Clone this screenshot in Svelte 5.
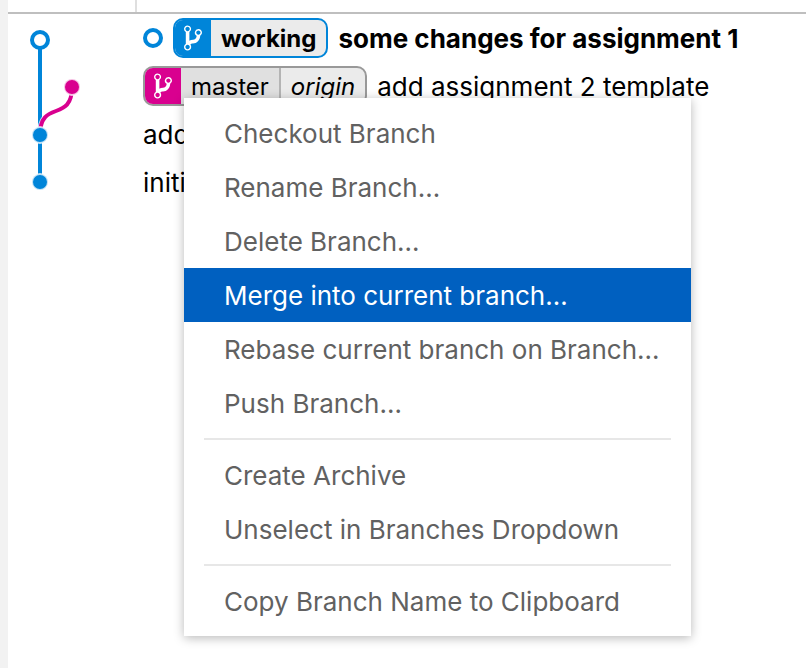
<script>
  const commits = [
    {
      message: 'some changes for assignment 1',
      head: true,
      branch: { name: 'working', color: '#0085d9' }
    },
    {
      message: 'add assignment 2 template',
      branch: { name: 'master', remote: 'origin', color: '#d9008f' }
    },
    { message: 'add' },
    { message: 'initial' }
  ];

  const groups = [
    [
      'Checkout Branch',
      'Rename Branch…',
      'Delete Branch…',
      'Merge into current branch…',
      'Rebase current branch on Branch…',
      'Push Branch…'
    ],
    ['Create Archive', 'Unselect in Branches Dropdown'],
    ['Copy Branch Name to Clipboard']
  ];

  let active = $state('Merge into current branch…');
</script>

<main>
  <header><span></span></header>
  <div class="body">
    <svg class="graph" width="128" height="192" viewBox="0 0 128 192" aria-hidden="true">
      <path d="M32 26V168" fill="none" stroke="#0085d9" stroke-width="4" />
      <path d="M64 73C64 109 32 85 32 121" fill="none" stroke="#fff" stroke-opacity=".75" stroke-width="6" />
      <path d="M64 73C64 109 32 85 32 121" fill="none" stroke="#d9008f" stroke-width="4" />
      <circle cx="32" cy="26" r="8" fill="#fff" stroke="#0085d9" stroke-width="4" />
      <g stroke="#fff" stroke-opacity=".75" stroke-width="2">
        <circle cx="64" cy="73" r="8" fill="#d9008f" />
        <circle cx="32" cy="121" r="8" fill="#0085d9" />
        <circle cx="32" cy="168" r="8" fill="#0085d9" />
      </g>
    </svg>
    <ol>
      {#each commits as commit}
        <li class:head={commit.head}>
          {#if commit.head}<i class="dot"></i>{/if}
          {#if commit.branch}
            <span class="ref">
              <svg style:background={commit.branch.color} width="36" height="36" viewBox="-5 -2 20 20" aria-hidden="true">
                <path fill="#fff" d="M10 5c0-1.11-.89-2-2-2a1.993 1.993 0 0 0-1 3.72v.3c-.02.52-.23.98-.63 1.38-.4.4-.86.61-1.38.63-.83.02-1.48.16-2 .45V4.72a1.993 1.993 0 0 0-1-3.72C.88 1 0 1.89 0 3a2 2 0 0 0 1 1.72v6.56c-.59.35-1 .99-1 1.72 0 1.11.89 2 2 2 1.11 0 2-.89 2-2 0-.53-.2-1-.53-1.36.09-.06.48-.41.59-.47.25-.11.56-.17.94-.17 1.05-.05 1.95-.45 2.75-1.25S8.95 7.77 9 6.73h-.02C9.59 6.37 10 5.73 10 5zM2 1.8c.66 0 1.2.55 1.2 1.2 0 .65-.55 1.2-1.2 1.2C1.35 4.2.8 3.65.8 3c0-.65.55-1.2 1.2-1.2zm0 12.41c-.66 0-1.2-.55-1.2-1.2 0-.65.55-1.2 1.2-1.2.65 0 1.2.55 1.2 1.2 0 .65-.55 1.2-1.2 1.2zm6-8c-.66 0-1.2-.55-1.2-1.2 0-.65.55-1.2 1.2-1.2.65 0 1.2.55 1.2 1.2 0 .65-.55 1.2-1.2 1.2z" />
              </svg>
              <span class="name" class:selected={commit.branch.remote}>{commit.branch.name}</span>
              {#if commit.branch.remote}<em>{commit.branch.remote}</em>{/if}
            </span>
          {/if}
          <span class="message">{commit.message}</span>
        </li>
      {/each}
    </ol>
  </div>

  <div class="menu" role="menu">
    {#each groups as group, i}
      {#if i > 0}<hr />{/if}
      {#each group as item}
        <button
          type="button"
          role="menuitem"
          class:active={item === active}
          onmouseenter={() => (active = item)}>{item}</button>
      {/each}
    {/each}
  </div>
</main>

<style>
  :global(body) {
    margin: 0;
    background: #fff;
  }
  main {
    position: relative;
    box-sizing: border-box;
    min-height: 100vh;
    border-left: 8px solid #f2f2f2;
    font: 26px/36px Inter, 'Liberation Sans', sans-serif;
    color: #000;
    overflow: hidden;
  }
  header {
    display: flex;
    height: 12px;
    border-bottom: 2px solid #bfbfbf;
  }
  header span {
    width: 127px;
    border-right: 2px solid #dfdfdf;
  }
  .body {
    display: flex;
  }
  .graph {
    flex: none;
  }
  ol {
    flex: 1;
    min-width: 0;
    margin: 0;
    padding: 0 0 0 7px;
    list-style: none;
  }
  li {
    display: flex;
    align-items: center;
    gap: 10px;
    height: 48px;
    white-space: nowrap;
  }
  .message {
    padding-top: 2px;
  }
  .dot {
    box-sizing: border-box;
    width: 20px;
    height: 20px;
    border: 4px solid #0085d9;
    border-radius: 50%;
  }
  .ref {
    display: flex;
    height: 36px;
    border: 2px solid #999;
    border-radius: 10px;
    background: #ebebeb;
    font-size: 24px;
    line-height: 38px;
    overflow: hidden;
  }
  .head {
    font-weight: 700;
  }
  .head .ref {
    border-color: #0085d9;
  }
  .name,
  em {
    padding: 0 10px;
  }
  .selected {
    background: #e0e0e0;
  }
  em {
    border-left: 2px solid #b4b4b4;
  }
  .menu {
    position: absolute;
    top: 98px;
    left: 176px;
    box-sizing: border-box;
    width: 507px;
    max-width: calc(100% - 176px);
    padding: 8px 0;
    background: #fff;
    box-shadow: 0 2px 10px rgba(0, 0, 0, 0.28);
  }
  button {
    display: block;
    width: 100%;
    height: 54px;
    margin: 0;
    padding: 2px 20px 0 40px;
    border: 0;
    background: none;
    color: #616161;
    font: inherit;
    text-align: left;
    white-space: nowrap;
  }
  button.active {
    background: #0060c0;
    color: #fff;
  }
  hr {
    height: 2px;
    margin: 8px 20px;
    border: 0;
    background: #e7e7e7;
  }
</style>
